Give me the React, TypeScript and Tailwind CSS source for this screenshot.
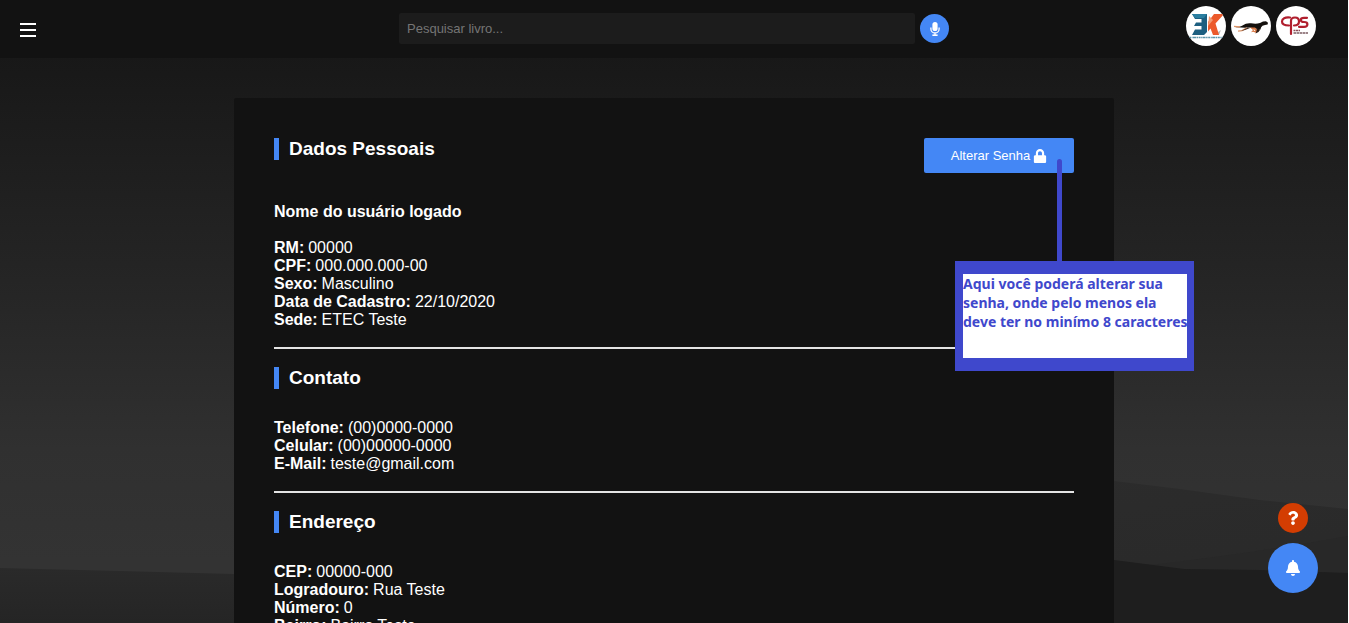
import type { ReactNode } from "react";
import { FaBell, FaLock, FaQuestion } from "react-icons/fa";

type Field = { label: string; value: string };

const personal: Field[] = [
  { label: "RM", value: "00000" },
  { label: "CPF", value: "000.000.000-00" },
  { label: "Sexo", value: "Masculino" },
  { label: "Data de Cadastro", value: "22/10/2020" },
  { label: "Sede", value: "ETEC Teste" },
];

const contact: Field[] = [
  { label: "Telefone", value: "(00)0000-0000" },
  { label: "Celular", value: "(00)00000-0000" },
  { label: "E-Mail", value: "teste@gmail.com" },
];

const address: Field[] = [
  { label: "CEP", value: "00000-000" },
  { label: "Logradouro", value: "Rua Teste" },
  { label: "Número", value: "0" },
  { label: "Bairro", value: "Bairro Teste" },
];

function Backdrop() {
  return (
    <svg
      aria-hidden="true"
      className="absolute inset-0 h-full w-full"
      viewBox="0 0 1348 623"
      preserveAspectRatio="none"
    >
      <defs>
        <linearGradient id="sky" x1="0" y1="0" x2="0" y2="1">
          <stop offset="0.09" stopColor="#181818" />
          <stop offset="0.45" stopColor="#252525" />
          <stop offset="0.72" stopColor="#303030" />
          <stop offset="0.9" stopColor="#333333" />
        </linearGradient>
        <linearGradient id="hillLeft" x1="0" y1="0" x2="0" y2="1">
          <stop offset="0" stopColor="#2a2a2a" />
          <stop offset="1" stopColor="#252525" />
        </linearGradient>
        <linearGradient id="hillRight" x1="0" y1="0" x2="0.3" y2="1">
          <stop offset="0" stopColor="#2c2c2c" />
          <stop offset="1" stopColor="#292929" />
        </linearGradient>
      </defs>
      <rect width="1348" height="623" fill="url(#sky)" />
      <path d="M0 568L120 571L234 574L600 580V623H0Z" fill="url(#hillLeft)" />
      <path d="M1000 468L1114 481L1180 489L1260 500L1348 509V623H1000Z" fill="url(#hillRight)" />
      <path d="M1150 565Q1260 552 1348 536V580H1150Z" fill="#282828" />
      <path d="M1000 548L1114 560L1184 569L1260 570L1348 573V623H1000Z" fill="#1e1e1e" />
    </svg>
  );
}

function Badge({ label, children }: { label: string; children: ReactNode }) {
  return (
    <a href="#" aria-label={label} className="block size-10 overflow-hidden rounded-full bg-white">
      <svg viewBox="0 0 40 40" className="size-10" aria-hidden="true">
        {children}
      </svg>
    </a>
  );
}

function TeamLogo() {
  return (
    <>
      <path d="M29 28L35 24L33 29Z" fill="#bdbdbd" />
      <path d="M6 8H21V26L18 29H6L9 23.5H15.5V20H8L10 16.5H15.5V13H9Z" fill="#1d5f80" />
      <path d="M6 8H21L18 12H9Z" fill="#2a7ea0" />
      <path d="M28 8H38L29.5 17.5L33 29H27L24.5 22.5L22 25.5V16Z" fill="#ec5a2b" />
      <path d="M23 10L27 14L22 20Z" fill="#f39a72" />
      <path
        d="M3 31.5H37"
        stroke="#5a93a8"
        strokeWidth="1.6"
        strokeDasharray="2 .6 1 .4 3 .5 1.5 .6"
      />
    </>
  );
}

function CheetahLogo() {
  return (
    <>
      <path
        d="M3 20.2C6 21.5 9 21 12 19.2C14 17.8 17 16.8 20 17.3C23 17.8 26 18 29 17L32 15.4L35 15.2L37 16.8L36.6 18.4L34 19L31.5 19.8L30 21.5L29.5 23.5L27 24L25 22.4L21 22L18 21.6L14 21.8L10 21.5L5 21.3Z"
        fill="#14100d"
      />
      <path
        d="M3 20.4L9 21M7 25.2L11 24.6L16 21.8"
        stroke="#dd9468"
        strokeWidth="1.3"
        fill="none"
      />
      <path d="M10 25L13 23.4L17 21.4L19 22L14 24Z" fill="#3a2419" />
      <path d="M19 21.5L24 21.5L27 24.5L25 26.8L22 25.8L20 26.2L22 24Z" fill="#d97845" />
      <path d="M26 22L29 24L27.5 26L24.5 27.4L25.5 25Z" fill="#2a1a12" />
      <path d="M22.5 23L24.5 24.5L23 25Z" fill="#ffffff" />
    </>
  );
}

function CpsLogo() {
  return (
    <>
      <g fill="none" stroke="#b01f2e" strokeWidth="2.2" strokeLinecap="round">
        <path d="M14 11.5C9 11 6 12.5 6 15.5C6 18.5 8 19.5 13 19.5" />
        <path d="M15 28V15C15 12.5 16.5 11.5 19 11.5C21.5 11.5 23 13 23 15.5C23 18.5 21.5 19.5 18 19.5" />
        <path d="M31 11.8H28C25.5 11.8 24.8 12.8 24.8 14C24.8 15.5 26 16 28 16C30.5 16 31.4 17 31.4 18.2C31.4 20 30 20.8 28 20.8H23" />
      </g>
      <path d="M17.5 24.5H24" stroke="#8d5059" strokeWidth="1.4" strokeDasharray="2 .5" />
      <path d="M17.5 27H32" stroke="#7c5c62" strokeWidth="1.6" strokeDasharray="3 .5 2 .5" />
    </>
  );
}

function MicIcon() {
  return (
    <svg viewBox="0 0 10 14" className="h-[14px] w-[10px]" aria-hidden="true">
      <rect x="2.4" y="0" width="5.2" height="9" rx="2.6" fill="#ffffff" />
      <path
        d="M.9 5.5V7A4.1 4 0 0 0 9.1 7V5.5M5 11V13"
        fill="none"
        stroke="#ffffff"
        strokeWidth="1.3"
      />
      <path d="M2.4 12.4H7.6V14H2.4Z" fill="#ffffff" />
    </svg>
  );
}

function Header() {
  return (
    <header className="relative z-10 grid h-[58px] shrink-0 grid-cols-[1fr_minmax(0,550px)_1fr] items-start bg-[#121212]">
      <button type="button" aria-label="Abrir menu" className="mt-5 ml-5 w-4 cursor-pointer">
        <svg viewBox="0 0 16 20" className="h-5 w-4" fill="#ffffff" aria-hidden="true">
          <path d="M0 3H16V5H0ZM0 9H16V11H0ZM0 15H16V17H0Z" />
        </svg>
      </button>
      <form className="mt-[13px] flex items-center gap-[5px]" onSubmit={(e) => e.preventDefault()}>
        <input
          type="search"
          aria-label="Pesquisar livro"
          placeholder="Pesquisar livro..."
          className="h-[31px] min-w-0 flex-1 rounded-xs bg-[#1c1c1c] px-2 text-[13px] text-white outline-none placeholder:text-[#757575]"
        />
        <button
          type="button"
          aria-label="Pesquisar por voz"
          className="flex size-[29px] items-center justify-center rounded-full bg-[#4487f5]"
        >
          <MicIcon />
        </button>
      </form>
      <nav aria-label="Instituições" className="mt-[6px] mr-8 flex justify-end gap-[5px]">
        <Badge label="Equipe">
          <TeamLogo />
        </Badge>
        <Badge label="Etec">
          <CheetahLogo />
        </Badge>
        <Badge label="Centro Paula Souza">
          <CpsLogo />
        </Badge>
      </nav>
    </header>
  );
}

function Title({ children }: { children: ReactNode }) {
  return (
    <h2 className="h-[22px] border-l-5 border-[#4487f5] pl-[10px] text-[19px] leading-[21px] font-bold">
      {children}
    </h2>
  );
}

function Fields({ items }: { items: Field[] }) {
  return (
    <dl>
      {items.map((item) => (
        <div key={item.label} className="flex gap-1">
          <dt className="font-bold">{item.label}:</dt>
          <dd>{item.value}</dd>
        </div>
      ))}
    </dl>
  );
}

function Divider() {
  return <hr className="my-[18px] border-t-2 border-[#e4e4e4]" />;
}

function PasswordHint() {
  return (
    <div role="note" className="absolute top-[21px] -right-[120px] w-[239px]">
      <div className="ml-[102px] h-[102px] w-[5px] rounded-t-full bg-[#3f48cc]" />
      <div className="border-y-[13px] border-r-7 border-l-8 border-[#3f48cc] bg-white">
        <p className="h-[84px] font-['Noto_Sans',sans-serif] text-[14px] leading-[19px] font-bold whitespace-nowrap text-[#3f48cc]">
          Aqui você poderá alterar sua
          <br />
          senha, onde pelo menos ela
          <br />
          deve ter no minímo 8 caracteres
        </p>
      </div>
    </div>
  );
}

export default function App() {
  return (
    <div className="relative flex h-screen flex-col overflow-hidden border-r border-white bg-[#181818] font-['Liberation_Sans',Arial,sans-serif] text-base leading-[18px] text-white">
      <Backdrop />
      <Header />
      <main className="relative flex-1 overflow-y-auto px-5 pt-10 [scrollbar-width:none]">
        <article className="mx-auto max-w-[880px] rounded-xs bg-[#121212] p-10">
          <section>
            <div className="mb-[30px] flex items-start justify-between">
              <Title>Dados Pessoais</Title>
              <div className="relative">
                <button
                  type="button"
                  className="flex h-[35px] w-[150px] items-center justify-center gap-[3px] rounded-xs bg-[#4487f5] text-[13px]"
                >
                  Alterar Senha
                  <FaLock className="size-[14px]" />
                </button>
                <PasswordHint />
              </div>
            </div>
            <h3 className="mb-[18px] font-bold">Nome do usuário logado</h3>
            <Fields items={personal} />
          </section>
          <Divider />
          <section className="flex flex-col gap-[30px]">
            <Title>Contato</Title>
            <Fields items={contact} />
          </section>
          <Divider />
          <section className="flex flex-col gap-[30px]">
            <Title>Endereço</Title>
            <Fields items={address} />
          </section>
        </article>
      </main>
      <div className="fixed right-[31px] bottom-[30px] z-20 flex flex-col items-center gap-[10px] text-white">
        <button
          type="button"
          aria-label="Ajuda"
          className="flex size-[30px] items-center justify-center rounded-full bg-[#d33d02]"
        >
          <FaQuestion className="size-[14px]" />
        </button>
        <button
          type="button"
          aria-label="Notificações"
          className="flex size-[50px] items-center justify-center rounded-full bg-[#4487f5]"
        >
          <FaBell className="size-4" />
        </button>
      </div>
    </div>
  );
}
